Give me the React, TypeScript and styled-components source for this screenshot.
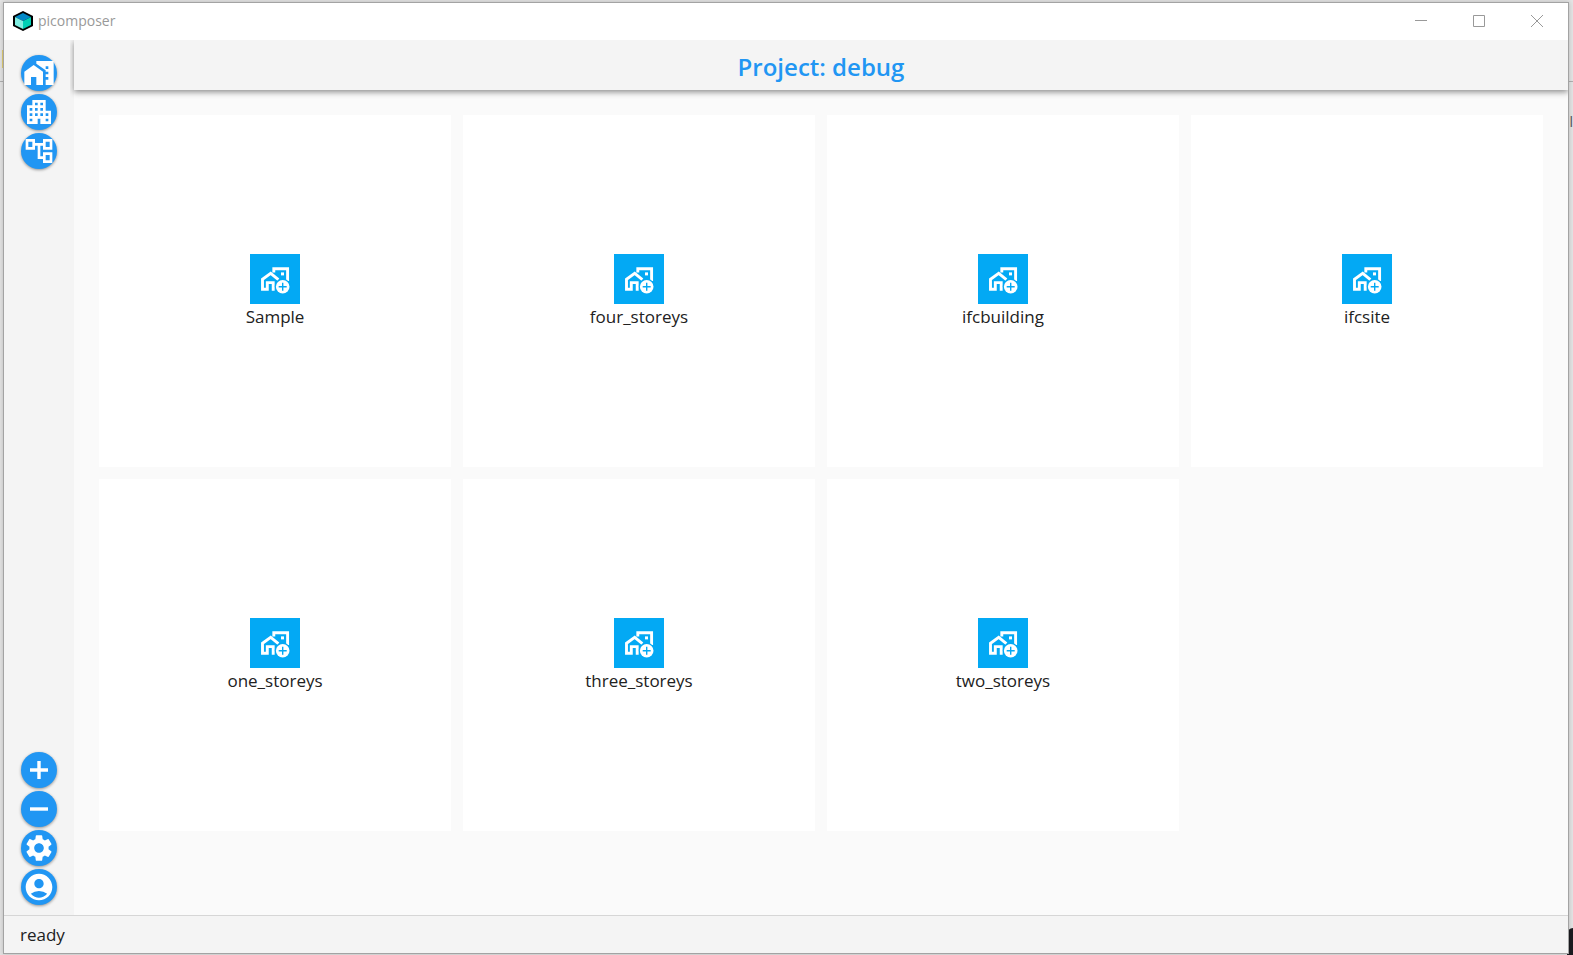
import React from 'react';
import styled, { createGlobalStyle } from 'styled-components';
import {
  MdHomeWork,
  MdApartment,
  MdOutlineAccountTree,
  MdSettings,
  MdAccountCircle,
} from 'react-icons/md';

const GlobalStyle = createGlobalStyle`
  * { box-sizing: border-box; }
  body {
    margin: 0;
    background: #e4e4e4;
    font-family: 'Open Sans', 'Noto Sans', sans-serif;
    color: #212121;
  }
  button { font: inherit; border: 0; padding: 0; cursor: pointer; }
  svg { display: block; }
`;

const Desktop = styled.div`
  position: relative;
  display: flex;
  height: 100vh;
  padding: 2px 4px 1px 3px;
  overflow: hidden;
`;

const Behind = styled.div`
  position: absolute;
  inset: 0;
`;

const Tab = styled.div`
  position: absolute;
  left: 2px;
  top: 50px;
  width: 4px;
  height: 18px;
  background: #e3cf74;
`;

const Rule = styled.div`
  position: absolute;
  left: 0;
  right: 0;
  top: 81px;
  height: 1px;
  background: #b0b0b0;
`;

const Clipped = styled.span`
  position: absolute;
  right: 0;
  top: 113px;
  font-size: 14px;
  line-height: 18px;
  color: #555;
`;

const Corner = styled.div`
  position: absolute;
  right: 0;
  bottom: 0;
  width: 6px;
  height: 27px;
  background: #1b1c20;
  border-top-left-radius: 6px;
`;

const Window = styled.div`
  position: relative;
  flex: 1;
  min-width: 0;
  display: flex;
  flex-direction: column;
  border: 1px solid #a3a3a3;
  background: #fafafa;
  box-shadow: 0 0 5px rgba(0, 0, 0, 0.2);
`;

const TitleBar = styled.header`
  display: flex;
  align-items: center;
  height: 37px;
  flex: none;
  padding: 0 2px 2px 8px;
  background: #fff;
`;

const AppName = styled.span`
  flex: 1;
  margin-left: 4px;
  font-size: 14px;
  line-height: 20px;
  color: #999;
`;

const WindowButton = styled.button`
  width: 58px;
  height: 34px;
  display: grid;
  place-items: center;
  background: transparent;
`;

const Body = styled.div`
  flex: 1;
  min-height: 0;
  display: flex;
`;

const Sidebar = styled.nav`
  width: 70px;
  flex: none;
  display: flex;
  flex-direction: column;
  justify-content: space-between;
  padding: 15px 0 10px;
  background: #f4f4f4;
`;

const ButtonGroup = styled.div`
  display: flex;
  flex-direction: column;
  align-items: center;
  gap: 3px;
`;

const RoundButton = styled.button`
  width: 36px;
  height: 36px;
  display: grid;
  place-items: center;
  border-radius: 50%;
  background: #2196f3;
  color: #fff;
  box-shadow: 0 1px 3px rgba(0, 0, 0, 0.4);
`;

const Main = styled.main`
  flex: 1;
  min-width: 0;
  display: flex;
  flex-direction: column;
`;

const Heading = styled.h1`
  position: relative;
  flex: none;
  margin: 0;
  height: 50px;
  background: #f4f4f4;
  color: #2196f3;
  font-size: 24px;
  font-weight: 600;
  line-height: 54px;
  text-align: center;
  box-shadow: 0 2px 6px rgba(0, 0, 0, 0.45);
  clip-path: inset(0 0 -12px -4px);
`;

const Grid = styled.div`
  display: grid;
  grid-template-columns: repeat(4, minmax(0, 1fr));
  gap: 12px;
  padding: 25px;
`;

const Tile = styled.div`
  aspect-ratio: 1;
  display: flex;
  flex-direction: column;
  align-items: center;
  justify-content: center;
  background: #fff;
`;

const TileButton = styled.button`
  width: 50px;
  height: 50px;
  display: grid;
  place-items: center;
  background: #03a9f4;
  color: #fff;
`;

const TileLabel = styled.label`
  font-size: 17px;
  line-height: 25px;
`;

const StatusBar = styled.footer`
  flex: none;
  height: 38px;
  padding-left: 16px;
  border-top: 1px solid #d6d6d6;
  background: #f4f4f4;
  font-size: 17px;
  line-height: 38px;
`;

const PlusIcon = ({ size = 32 }: { size?: number }) => (
  <svg width={size} height={size} viewBox="0 0 32 32" stroke="currentColor" strokeWidth="3.4" aria-hidden="true">
    <path d="M7 16h18M16 7v18" />
  </svg>
);

const MinusIcon = ({ size = 32 }: { size?: number }) => (
  <svg width={size} height={size} viewBox="0 0 32 32" stroke="currentColor" strokeWidth="3.4" aria-hidden="true">
    <path d="M7 16h18" />
  </svg>
);

const AddHomeIcon = () => (
  <svg width="50" height="50" viewBox="0 0 50 50" fill="none" aria-hidden="true">
    <path
      d="M23.8 18.4V14.8H37.6V27M28.4 25.6 20.7 19.4 12.5 25.2V35.2H17.3V28.6H23.2V36.7"
      stroke="currentColor"
      strokeWidth="2.9"
    />
    <path d="M31 18.4h3v3h-3z" fill="currentColor" />
    <circle cx="32.7" cy="32.7" r="7.9" fill="#03a9f4" />
    <circle cx="32.7" cy="32.7" r="6.8" fill="currentColor" />
    <path d="M28.7 32.7h8M32.7 28.7v8" stroke="#03a9f4" strokeWidth="1.4" />
  </svg>
);

const projects = ['Sample', 'four_storeys', 'ifcbuilding', 'ifcsite', 'one_storeys', 'three_storeys', 'two_storeys'];

const topActions = [
  { label: 'Projects', Icon: MdHomeWork },
  { label: 'Buildings', Icon: MdApartment },
  { label: 'Structure', Icon: MdOutlineAccountTree },
];

const bottomActions = [
  { label: 'Add', Icon: PlusIcon },
  { label: 'Remove', Icon: MinusIcon },
  { label: 'Settings', Icon: MdSettings },
  { label: 'Account', Icon: MdAccountCircle },
];

const Logo = () => (
  <svg width="22" height="20" viewBox="0 0 22 20" aria-hidden="true">
    <path d="M11 0 21 5v10l-10 5L1 15V5z" fill="#000" />
    <path d="M11 2 19 6l-8 4-8-4z" fill="#0288c7" />
    <path d="M3 6l8 4v8l-8-4z" fill="#80ede0" />
    <path d="M19 6l-8 4v8l8-4z" fill="#00d0b4" />
  </svg>
);

export default function App() {
  return (
    <Desktop>
      <GlobalStyle />
      <Behind>
        <Tab />
        <Rule />
        <Clipped>il</Clipped>
        <Corner />
      </Behind>
      <Window>
        <TitleBar>
          <Logo />
          <AppName>picomposer</AppName>
          <WindowButton aria-label="Minimize">
            <svg width="12" height="12" stroke="#999" fill="none"><path d="M0 5.5h12" /></svg>
          </WindowButton>
          <WindowButton aria-label="Maximize">
            <svg width="12" height="12" stroke="#999" fill="none"><path d="M.5.5h11v11H.5z" /></svg>
          </WindowButton>
          <WindowButton aria-label="Close">
            <svg width="12" height="12" stroke="#999" fill="none"><path d="M0 0l12 12M12 0 0 12" /></svg>
          </WindowButton>
        </TitleBar>
        <Body>
          <Sidebar>
            <ButtonGroup>
              {topActions.map(({ label, Icon }) => (
                <RoundButton key={label} aria-label={label}><Icon size={32} /></RoundButton>
              ))}
            </ButtonGroup>
            <ButtonGroup>
              {bottomActions.map(({ label, Icon }) => (
                <RoundButton key={label} aria-label={label}><Icon size={32} /></RoundButton>
              ))}
            </ButtonGroup>
          </Sidebar>
          <Main>
            <Heading>Project: debug</Heading>
            <Grid>
              {projects.map((name) => (
                <Tile key={name}>
                  <TileButton id={name}><AddHomeIcon /></TileButton>
                  <TileLabel htmlFor={name}>{name}</TileLabel>
                </Tile>
              ))}
            </Grid>
          </Main>
        </Body>
        <StatusBar>ready</StatusBar>
      </Window>
    </Desktop>
  );
}
